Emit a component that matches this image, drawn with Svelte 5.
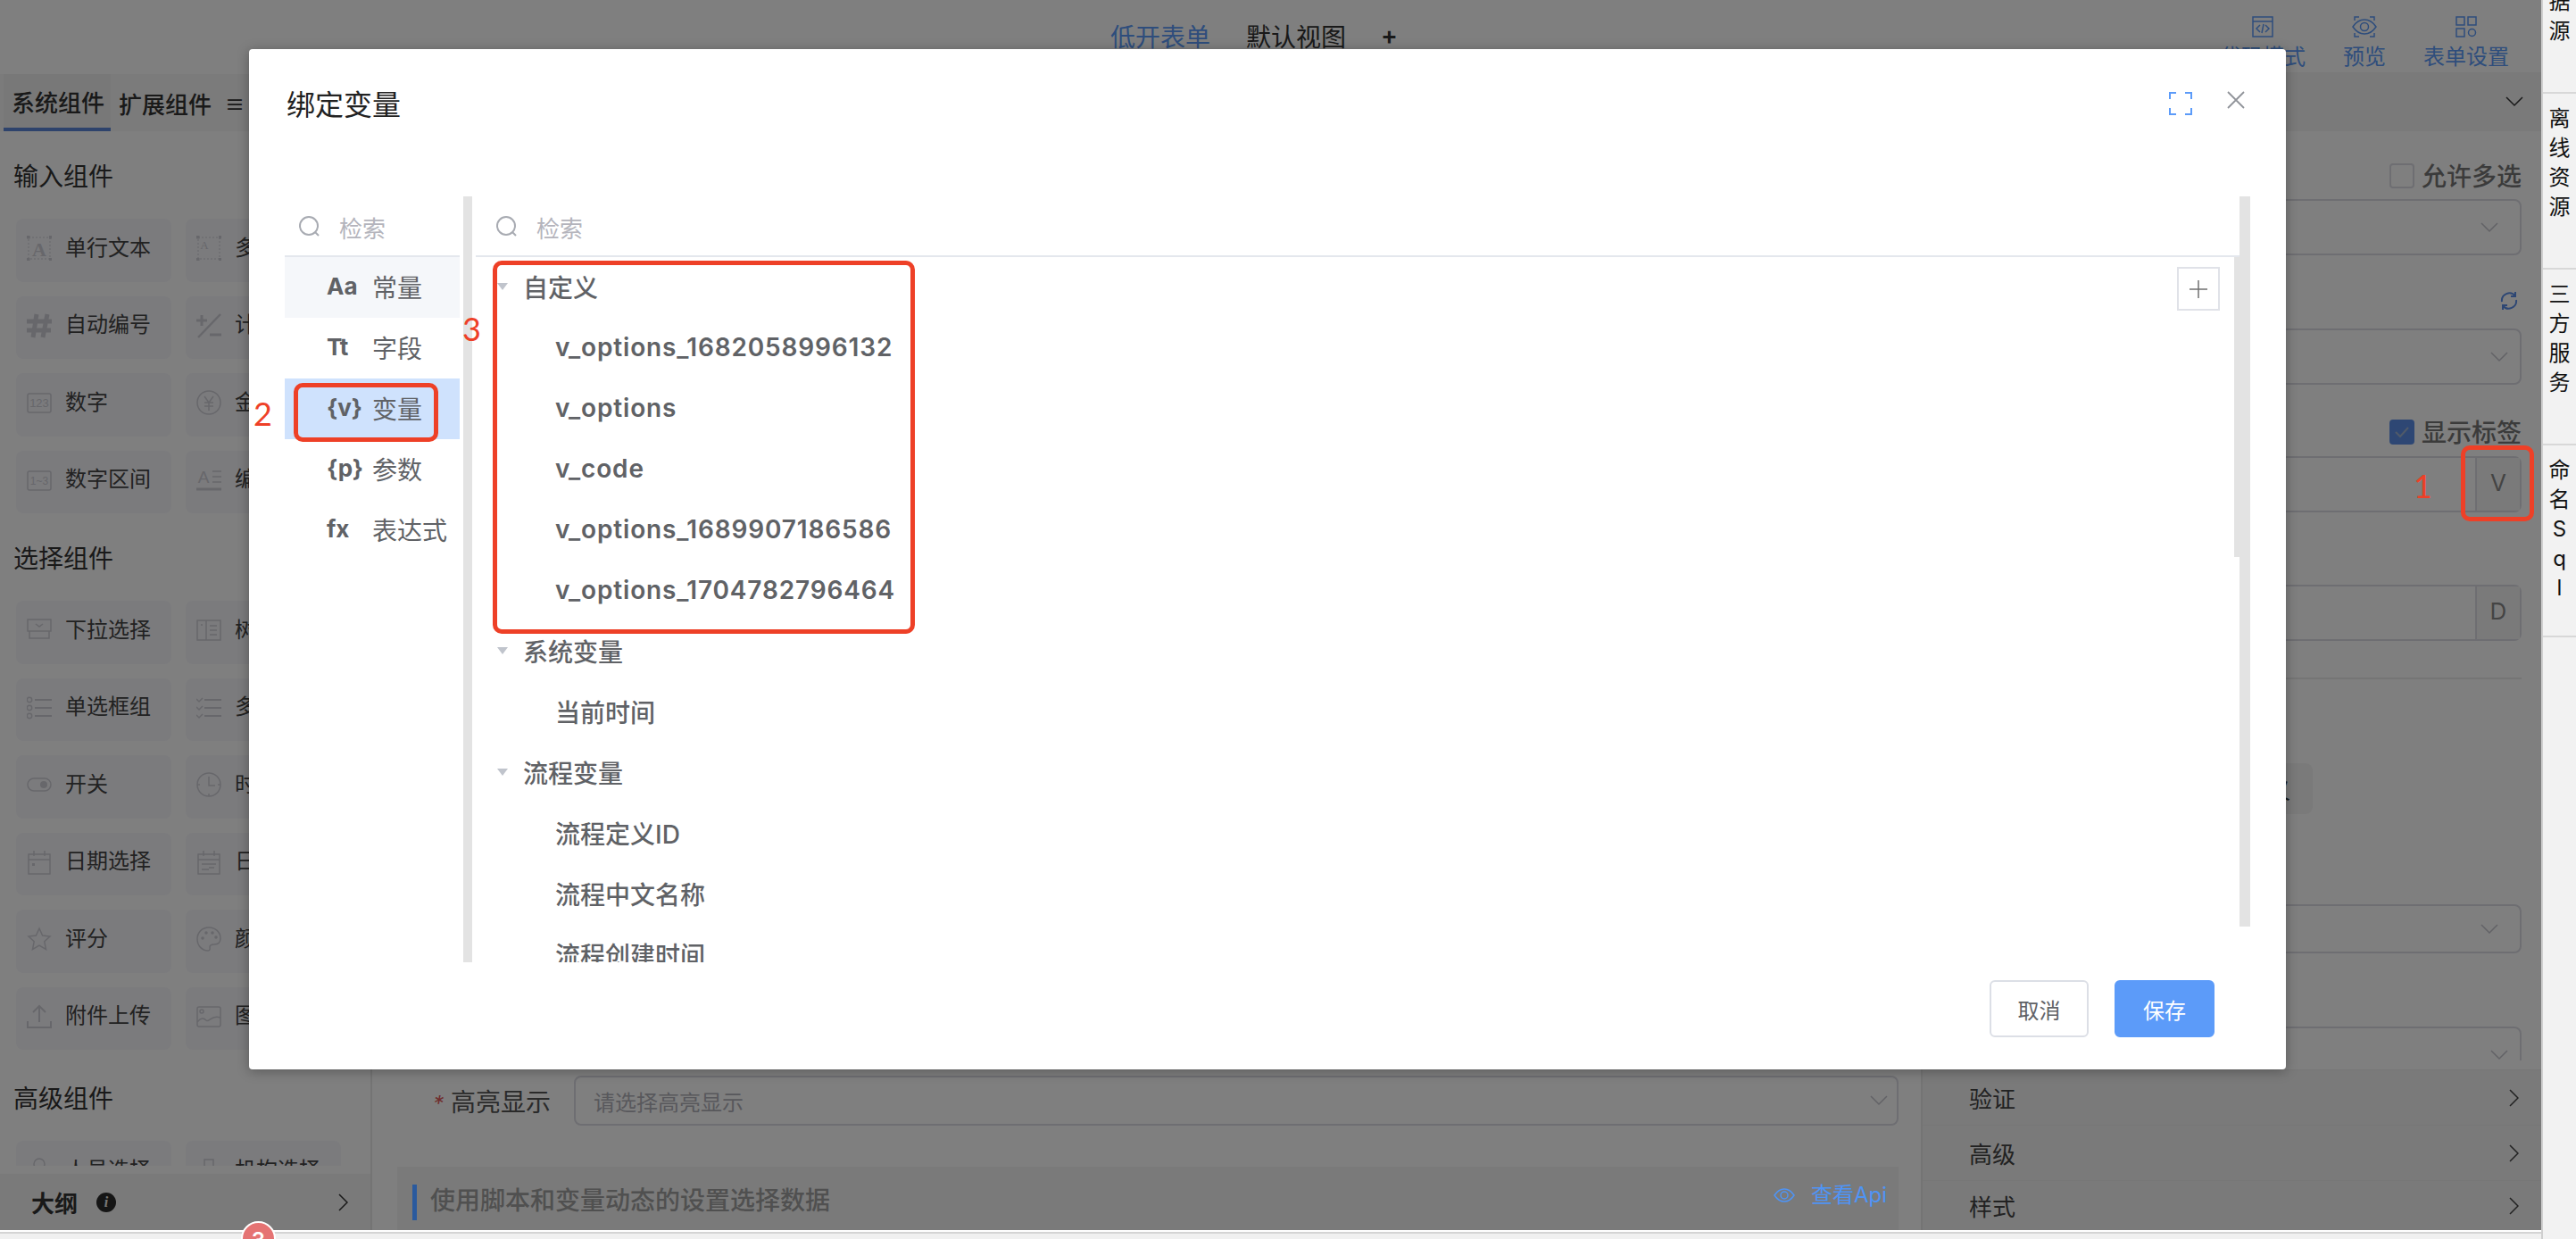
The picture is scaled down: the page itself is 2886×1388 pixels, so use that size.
<script>
  const icons = {
    textA: '<g stroke-dasharray="2 2" stroke-width="1"><rect x="2" y="2" width="24" height="24"/></g><g fill="currentColor" stroke="none"><rect x="0" y="0" width="3.5" height="3.5"/><rect x="25" y="0" width="3.5" height="3.5"/><rect x="0" y="25" width="3.5" height="3.5"/><rect x="25" y="25" width="3.5" height="3.5"/><text x="14" y="23" font-size="22" font-weight="700" font-family="Liberation Serif" text-anchor="middle">A</text></g>',
    multi: '<g stroke-dasharray="2 2" stroke-width="1"><rect x="2" y="2" width="24" height="24"/></g><g fill="currentColor" stroke="none"><rect x="0" y="0" width="3.5" height="3.5"/><rect x="25" y="0" width="3.5" height="3.5"/><rect x="0" y="25" width="3.5" height="3.5"/><rect x="25" y="25" width="3.5" height="3.5"/><text x="9" y="15" font-size="13" font-family="Liberation Serif" text-anchor="middle">A</text></g>',
    hash: '<path stroke-width="5" d="M11 1 7 27M23 1 18 27M0 9h28M0 19h27"/>',
    calc: '<path stroke-width="2.5" d="M27 1 2 27"/><path stroke-width="3" d="M0 8h12M6 2v12M15 24h13"/>',
    n123: '<rect x="1" y="4" width="26" height="21" rx="2"/><text x="14" y="19" font-size="13" fill="currentColor" stroke="none" font-family="Liberation Sans" text-anchor="middle">123</text>',
    yen: '<circle cx="14" cy="14" r="13"/><path d="m9 7 5 7 5-7M9 14h10M9 18h10M14 14v9"/>',
    range: '<rect x="1" y="4" width="26" height="21" rx="2"/><text x="14" y="19" font-size="12" fill="currentColor" stroke="none" font-family="Liberation Sans" text-anchor="middle">1~3</text>',
    editor: '<text x="8" y="17" font-size="19" fill="currentColor" stroke="none" font-family="Liberation Sans" text-anchor="middle">A</text><path d="M18 4h10M18 10h10M18 16h10"/><path stroke-width="3" d="M0 24h28"/>',
    dropdown: '<path d="M1 2h26v13H1zM10 7l4 3 4-3M3 15v8h22v-8"/>',
    tree: '<path d="M1 3h26v22H1zM11 3v22M15 9h8M15 14h8M15 19h8M5 8h2"/>',
    radio: '<circle cx="3" cy="5" r="2.7"/><circle cx="3" cy="14" r="2.7"/><circle cx="3" cy="23" r="2.7"/><path stroke-width="2" d="M9 5h19M9 14h19M9 23h19"/>',
    check: '<path d="m0 4 3 3 4-4M0 13l3 3 4-4M0 22l3 3 4-4"/><path stroke-width="2" d="M9 5h19M9 14h19M9 23h19"/>',
    toggle: '<rect x="1" y="7" width="26" height="14" rx="7"/><circle cx="19" cy="14" r="4" fill="currentColor" stroke="none"/>',
    clock: '<circle cx="14" cy="14" r="13"/><path d="M14 5v10h7M1 14h3M24 14h3M14 24v3"/>',
    date: '<path d="M2 5h24v22H2zM2 11h24M8 1v6M20 1v6"/><rect x="6" y="15" width="3" height="3" fill="currentColor" stroke="none"/>',
    daterange: '<path d="M2 5h24v22H2zM2 11h24M8 1v6M20 1v6M6 16h16M6 22h8M14 20h6"/>',
    star: '<path d="m14 2 3.6 8 8.4 1-6.200 5.800 1.700 8.700L14 21l-7.500 4.500 1.700-8.700L2 11l8.400-1z"/>',
    palette: '<path d="M14 1C6 1 1 7 1 14s5 13 12 13c3 0 2-3 2-4 0-3 3-3 5-3 4 0 7-2 7-7C27 6 21 1 14 1z"/><g fill="currentColor" stroke="none"><circle cx="7" cy="13" r="1.800"/><circle cx="11" cy="7" r="1.800"/><circle cx="18" cy="7" r="1.800"/><circle cx="22" cy="12" r="1.800"/></g>',
    upload: '<path stroke-width="2" d="M14 3v17M7 9l7-7 7 7M1 19v7h26v-7"/>',
    image: '<rect x="1" y="3" width="26" height="22" rx="2"/><circle cx="6" cy="8" r="2"/><path d="M1 20c4-5 7-5 10-2s6-7 16-3"/>',
    person: '<circle cx="14" cy="7" r="6"/><path d="M3 26c1-8 5-10 11-10s10 2 11 10"/>',
    org: '<path d="M9 2h10v9H9zM14 11v5M1 17h26M4 17v6M24 17v6"/>'
  };

  const groups = [
    { title: '输入组件', items: [
      ['单行文本', 'textA'], ['多行文本', 'multi'], ['自动编号', 'hash'], ['计算公式', 'calc'],
      ['数字', 'n123'], ['金额', 'yen'], ['数字区间', 'range'], ['编辑器', 'editor']
    ] },
    { title: '选择组件', items: [
      ['下拉选择', 'dropdown'], ['树形选择', 'tree'], ['单选框组', 'radio'], ['多选框组', 'check'],
      ['开关', 'toggle'], ['时间选择', 'clock'], ['日期选择', 'date'], ['日期区间', 'daterange'],
      ['评分', 'star'], ['颜色选择', 'palette'], ['附件上传', 'upload'], ['图片上传', 'image']
    ] },
    { title: '高级组件', items: [['人员选择', 'person'], ['机构选择', 'org']] }
  ];

  const kinds = [
    { code: 'Aa', label: '常量', cls: 'hover' },
    { code: 'Tt', label: '字段', cls: '' },
    { code: '{v}', label: '变量', cls: 'active' },
    { code: '{p}', label: '参数', cls: '' },
    { code: 'fx', label: '表达式', cls: '' }
  ];

  const tree = [
    { label: '自定义', children: ['v_options_1682058996132', 'v_options', 'v_code', 'v_options_1689907186586', 'v_options_1704782796464'] },
    { label: '系统变量', children: ['当前时间'] },
    { label: '流程变量', children: ['流程定义ID', '流程中文名称', '流程创建时间'] }
  ];

  const tabs = [
    { text: '数据源', cls: 'first' },
    { text: '离线资源', cls: '' },
    { text: '三方服务', cls: '' },
    { text: '命名Sql', cls: 'last' }
  ];
</script>

{#snippet chevron(cls)}
  <svg class={cls} width="20" height="12" viewBox="0 0 20 12" fill="none" stroke="currentColor" stroke-width="1.500"><path d="m1 1 9 9 9-9" /></svg>
{/snippet}

{#snippet arrow()}
  <svg width="11" height="20" viewBox="0 0 11 20" fill="none" stroke="currentColor" stroke-width="1.500"><path d="m1 1 9 9-9 9" /></svg>
{/snippet}

{#snippet search()}
  <svg class="search-icon" width="26" height="26" viewBox="0 0 26 26" fill="none" stroke="#a8abb2" stroke-width="2"><circle cx="12" cy="12" r="10" /><path d="m19 19 4 4" /></svg>
{/snippet}

<div class="page">
  <div class="main">
    <header class="topbar">
      <div class="view-tabs">
        <span class="blue">低开表单</span>
        <span>默认视图</span>
        <span class="plus">+</span>
      </div>
      <div class="top-actions">
        <div class="action">
          <svg width="24" height="24" viewBox="0 0 24 24" fill="none" stroke="currentColor" stroke-width="1.500"><path d="M1 1h22v22H1zM1 6h22M9 10l-4 4 4 4M15 10l4 4-4 4M13 9l-2 10" /></svg>
          <span>代码模式</span>
        </div>
        <div class="action">
          <svg width="28" height="24" viewBox="0 0 28 24" fill="none" stroke="currentColor" stroke-width="1.500"><path d="M1 12c4-6 8-8 13-8s9 2 13 8c-4 6-8 8-13 8S5 18 1 12z" /><circle cx="14" cy="12" r="4.500" /><path d="M3 5V1h5M25 5V1h-5M3 19v4h5M25 19v4h-5" /></svg>
          <span>预览</span>
        </div>
        <div class="action">
          <svg width="24" height="24" viewBox="0 0 24 24" fill="none" stroke="currentColor" stroke-width="1.500"><path d="M1 1h9v9H1zM14 1h9v9h-9zM1 14h9v9H1z" /><circle cx="18.500" cy="18.500" r="4" /></svg>
          <span>表单设置</span>
        </div>
      </div>
    </header>

    <div class="content">
      <aside class="left">
        <div class="left-tabs">
          <span class="left-tab on">系统组件</span>
          <span class="left-tab">扩展组件</span>
          <span class="left-menu">≡</span>
        </div>
        <div class="left-scroll">
          {#each groups as group}
            <section class="group">
              <h3>{group.title}</h3>
              <div class="cards">
                {#each group.items as item}
                  <div class="card">
                    <svg width="28" height="28" viewBox="0 0 28 28" fill="none" stroke="currentColor" stroke-width="1.500">{@html icons[item[1]]}</svg>
                    <span>{item[0]}</span>
                  </div>
                {/each}
              </div>
            </section>
          {/each}
        </div>
        <div class="outline">
          <span class="outline-title">大纲</span>
          <span class="info">i</span>
          <span class="outline-arrow">{@render arrow()}</span>
        </div>
      </aside>

      <section class="center">
        <div class="field">
          <label><em>*</em>高亮显示</label>
          <div class="select">
            <span class="placeholder">请选择高亮显示</span>
            {@render chevron('chev')}
          </div>
        </div>
        <div class="script-head">
          <span class="script-title">使用脚本和变量动态的设置选择数据</span>
        </div>
      </section>

      <aside class="right">
        <div class="right-bar">{@render chevron('dark')}</div>
        <div class="right-body">
          <div class="opt" style:margin-top="36px"><i class="box"></i><span>允许多选</span></div>
          <div class="select" style:margin-top="12px">{@render chevron('chev')}</div>
          <div class="refresh">
            <svg width="22" height="22" viewBox="0 0 22 22" fill="none" stroke="currentColor" stroke-width="2"><path d="M3 12A8.500 8.500 0 0 1 18 5.500M19 10a8.500 8.500 0 0 1-15 6.500M18 1v5h-5M4 21v-5h5" /></svg>
          </div>
          <div class="select shift" style:margin-top="18px">{@render chevron('chev')}</div>
          <div class="opt" style:margin-top="39px">
            <i class="box checked">
              <svg width="18" height="14" viewBox="0 0 18 14" fill="none" stroke="#a0b4d2" stroke-width="2"><path d="m2 7 5 5 9-10" /></svg>
            </i><span>显示标签</span>
          </div>
          <div class="select addon" style:margin-top="13px"><b>V</b></div>
          <div class="select addon" style:margin-top="81px"><b>D</b></div>
          <hr />
          <div class="chip"><span>自定义</span></div>
          <div class="select low" style:margin-top="101px">{@render chevron('chev')}</div>
          <div class="select shift" style:margin-top="82px">{@render chevron('chev')}</div>
        </div>
        {#each ['验证', '高级', '样式'] as name}
          <div class="fold">
            <span>{name}</span>
            {@render arrow()}
          </div>
        {/each}
      </aside>
    </div>

    <div class="mask"></div>
    <span class="api">
      <svg width="24" height="16" viewBox="0 0 24 16" fill="none" stroke="currentColor" stroke-width="1.500"><path d="M1 8c3-4.500 6.500-7 11-7s8 2.500 11 7c-3 4.500-6.500 7-11 7S4 12.500 1 8z" /><circle cx="12" cy="8" r="4" /></svg>
      查看Api
    </span>
    <i class="script-mark"></i>
  </div>

  <nav class="side">
    {#each tabs as tab}
      <div class="side-tab {tab.cls}">
        {#each tab.text as ch}
          <div>{ch}</div>
        {/each}
      </div>
    {/each}
  </nav>

  <div class="status"></div>
  <span class="badge">3</span>

  <div class="modal">
    <div class="modal-head">
      <h2>绑定变量</h2>
      <svg class="expand" width="26" height="26" viewBox="0 0 26 26" fill="none" stroke="#5c9bf9" stroke-width="2"><path d="M1 8V1h7M18 1h7v7M25 18v7h-7M8 25H1v-7" /></svg>
      <svg class="close" width="20" height="20" viewBox="0 0 20 20" fill="none" stroke="#909399" stroke-width="1.800"><path d="m1 1 18 18M19 1 1 19" /></svg>
    </div>
    <div class="modal-body">
      <div class="kinds">
        <div class="search">{@render search()}<span>检索</span></div>
        {#each kinds as kind}
          <div class="kind {kind.cls}"><b>{kind.code}</b><span>{kind.label}</span></div>
        {/each}
      </div>
      <div class="rail"></div>
      <div class="tree-pane">
        <div class="search">{@render search()}<span>检索</span></div>
        <div class="tree">
          <button class="add" aria-label="新增">
            <svg width="20" height="20" viewBox="0 0 20 20" stroke="#707070" stroke-width="1.500"><path d="M10 0v20M0 10h20" /></svg>
          </button>
          <i class="thumb"></i>
          {#each tree as node}
            <div class="row parent"><i class="caret"></i>{node.label}</div>
            {#each node.children as child}
              <div class="row child" class:latin={child.startsWith('v_')}>{child}</div>
            {/each}
          {/each}
        </div>
      </div>
      <div class="rail tall"></div>
    </div>
    <div class="modal-foot">
      <button class="btn">取消</button>
      <button class="btn primary">保存</button>
    </div>
  </div>

  <i class="mark m1"></i>
  <i class="mark m2"></i>
  <i class="mark m3"></i>
  <span class="num n1">1</span>
  <span class="num n2">2</span>
  <span class="num n3">3</span>
</div>

<style>
  :global(body) {
    margin: 0;
    background: #fff;
  }

  .page {
    position: relative;
    display: grid;
    grid-template-columns: 2847px 39px;
    grid-template-rows: 1378px 10px;
    width: 2886px;
    height: 1388px;
    overflow: hidden;
    font-family: Inter, "Noto Sans CJK SC", sans-serif;
    color: #444;
  }

  .main {
    position: relative;
    display: flex;
    flex-direction: column;
    min-width: 0;
    background: #fff;
    overflow: hidden;
  }

  .mask {
    position: absolute;
    inset: 0;
    background: rgba(0, 0, 0, 0.5);
  }

  .topbar {
    position: relative;
    flex: 0 0 78px;
    display: flex;
    justify-content: space-between;
    padding: 0 27px 0 1244px;
  }

  .view-tabs {
    display: flex;
    align-items: center;
    gap: 40px;
    height: 80px;
    font-size: 28px;
    color: #333;
  }

  .blue {
    color: #5c9bf9;
  }

  .plus {
    margin-left: -1px;
    font-weight: 600;
  }

  .top-actions {
    display: flex;
  }

  .action {
    display: flex;
    flex-direction: column;
    align-items: center;
    gap: 5px;
    width: 114px;
    padding-top: 18px;
    font-size: 24px;
    line-height: 34px;
    color: #5c9bf9;
    white-space: nowrap;
  }

  .content {
    flex: 1;
    display: flex;
    min-height: 0;
  }

  /* left component palette */
  .left {
    flex: 0 0 415px;
    display: flex;
    flex-direction: column;
    min-height: 0;
    padding-top: 2px;
    box-sizing: border-box;
  }

  .left-tabs {
    flex: 0 0 64px;
    display: flex;
    align-items: stretch;
    gap: 4px;
    padding-left: 4px;
    background: #f6f6f6;
    font-size: 26px;
    font-weight: 500;
    color: #333;
    box-sizing: border-box;
  }

  .left-tab {
    display: flex;
    align-items: center;
    height: 64px;
    padding: 0 5px;
    white-space: nowrap;
    box-sizing: border-box;
  }

  .left-tab.on {
    width: 120px;
    padding: 0 0 0 9px;
    background: #f0f0f0;
    border-bottom: 4px solid #5c86d8;
  }

  .left-menu {
    align-self: center;
    margin-left: 6px;
    font-size: 22px;
  }

  .left-scroll {
    flex: 1;
    min-height: 0;
    margin-bottom: 9px;
    padding-top: 33px;
    overflow: hidden;
  }

  .group {
    padding-left: 15px;
    margin-bottom: 33px;
  }

  .group:last-child {
    margin-top: 37px;
  }

  h3 {
    height: 40px;
    margin: 0 0 25px;
    font-size: 28px;
    line-height: 36px;
    font-weight: 400;
    color: #333;
  }

  .cards {
    display: grid;
    grid-template-columns: 174px 174px;
    gap: 16px;
    margin-left: 3px;
  }

  .card {
    display: flex;
    align-items: center;
    gap: 15px;
    height: 70.5px;
    padding: 0 0 0 12px;
    background: #f6f6fb;
    border-radius: 8px;
    font-size: 24px;
    color: #444;
    box-sizing: border-box;
  }

  .card span {
    margin-bottom: 10px;
  }

  .card svg {
    flex: none;
    margin-bottom: 4px;
    color: #cfcfd6;
  }

  .outline {
    flex: 0 0 63px;
    display: flex;
    align-items: center;
    padding: 0 25px 0 35px;
    background: #f5f5f5;
    font-size: 26px;
    font-weight: 600;
    color: #333;
  }

  .outline-title {
    width: 73px;
  }

  .info {
    width: 22px;
    height: 22px;
    border-radius: 50%;
    background: #2b2b2b;
    color: #eee;
    font: italic 700 16px/22px "Liberation Serif", serif;
    text-align: center;
  }

  .outline-arrow {
    margin-left: auto;
    line-height: 0;
  }

  /* center form */
  .center {
    flex: 1;
    min-width: 0;
    display: flex;
    flex-direction: column;
    justify-content: flex-end;
    padding: 0 25px 0 28px;
    background: #fff;
    border-left: 2px solid #e8e8e8;
    border-right: 2px solid #e8e8e8;
    box-sizing: border-box;
  }

  .field {
    display: flex;
    align-items: center;
    gap: 26px;
    margin-bottom: 46px;
  }

  label {
    width: 172px;
    text-align: right;
    font-size: 28px;
    color: #555;
  }

  label em {
    margin-right: 8px;
    color: #e05a5a;
    font-size: 24px;
  }

  .placeholder {
    font-size: 24px;
    color: #b0b0b8;
  }

  .select {
    position: relative;
    display: flex;
    align-items: center;
    flex: 1;
    min-height: 56px;
    padding: 0 10px 0 20px;
    border: 2px solid #dcdce4;
    border-radius: 8px;
    box-sizing: border-box;
  }

  .right-body .select {
    flex: 0 0 63px;
    min-height: 63px;
    padding: 0 24px;
  }

  .right-body .select.low {
    flex-basis: 55px;
    min-height: 55px;
  }

  .chev {
    margin-left: auto;
    color: #c4c4cc;
  }

  .shift .chev {
    margin-right: -11px;
  }

  .dark {
    color: #333;
  }

  .script-head {
    flex: 0 0 71px;
    display: flex;
    align-items: center;
    padding-left: 37px;
    background: #f5f5f5;
    box-sizing: border-box;
  }

  .script-title {
    font-size: 28px;
    font-weight: 500;
    color: #a0a0a0;
  }

  .script-mark {
    position: absolute;
    left: 462px;
    top: 1327px;
    width: 5px;
    height: 40px;
    background: #2a5a9e;
  }

  .api {
    position: absolute;
    left: 1987px;
    top: 1324px;
    display: flex;
    align-items: center;
    gap: 18px;
    font-size: 24px;
    line-height: 30px;
    color: #4f94f5;
  }

  /* right properties */
  .right {
    flex: 0 0 693px;
    display: flex;
    flex-direction: column;
    min-height: 0;
  }

  .right-bar {
    flex: 0 0 66px;
    display: flex;
    align-items: center;
    justify-content: flex-end;
    padding-right: 20px;
    background: #f5f5f5;
  }

  .right-body {
    flex: 1;
    min-height: 0;
    display: flex;
    flex-direction: column;
    margin-bottom: 10px;
    padding: 0 22px;
    overflow: hidden;
  }

  .opt {
    flex: none;
    display: flex;
    align-items: center;
    justify-content: flex-end;
    gap: 8px;
    height: 28px;
    font-size: 28px;
    font-weight: 500;
    color: #777;
  }

  .opt span {
    margin-bottom: 3px;
  }

  .box {
    display: flex;
    align-items: center;
    justify-content: center;
    width: 28px;
    height: 28px;
    border: 2px solid #dcdce4;
    border-radius: 4px;
    box-sizing: border-box;
  }

  .box.checked {
    background: #5c8fe8;
    border-color: #5c8fe8;
  }

  .refresh {
    flex: none;
    display: flex;
    justify-content: flex-end;
    height: 24px;
    margin-top: 40px;
    padding-right: 3px;
    color: #5c8fe8;
  }

  .select.addon {
    justify-content: flex-end;
    padding: 0;
  }

  .select.addon b {
    display: flex;
    align-items: center;
    justify-content: center;
    width: 50px;
    height: 100%;
    padding-bottom: 4px;
    background: #f5f5f5;
    border-left: 2px solid #dcdce4;
    font-size: 26px;
    font-weight: 400;
    color: #888;
    box-sizing: border-box;
  }

  hr {
    flex: none;
    width: 100%;
    height: 2px;
    margin: 41px 0 0;
    border: 0;
    background: #eaeaea;
  }

  .chip {
    flex: 0 0 57px;
    display: flex;
    align-items: center;
    justify-content: flex-end;
    width: 415px;
    margin-top: 94px;
    padding-right: 25px;
    background: #f5f5f5;
    border-radius: 8px;
    font-size: 26px;
    color: #333;
    box-sizing: border-box;
  }

  .fold {
    flex: 0 0 62px;
    display: flex;
    align-items: center;
    justify-content: space-between;
    padding: 0 25px 0 52px;
    background: #f5f5f5;
    border-top: 1px solid #eee;
    font-size: 26px;
    color: #444;
    box-sizing: border-box;
  }

  .fold:last-child {
    flex-basis: 56px;
  }

  /* vertical tabs */
  .side {
    grid-row: 1 / 3;
    grid-column: 2;
    position: relative;
    background: #f2f2f2;
    border-left: 2px solid #cfcfcf;
  }

  .side-tab {
    padding: 11px 0 52px;
    border-bottom: 2px solid #d8d8d8;
    font-size: 24px;
    line-height: 33px;
    color: #111;
    text-align: center;
  }

  .side-tab.first {
    margin-top: -59px;
  }

  .side-tab.last {
    padding-bottom: 37px;
  }

  .status {
    background: #f0f0f0;
    border-top: 2px solid #fff;
    box-shadow: inset 0 2px 0 #d4d4d4;
  }

  .badge {
    position: absolute;
    left: 270px;
    top: 1368px;
    width: 39px;
    height: 39px;
    border: 2px solid #fff;
    border-radius: 50%;
    background: #e57373;
    color: #fff;
    font-size: 24px;
    font-weight: 600;
    line-height: 39px;
    text-align: center;
    box-sizing: border-box;
  }

  /* dialog */
  .modal {
    position: absolute;
    left: 279px;
    top: 55px;
    display: flex;
    flex-direction: column;
    width: 2282px;
    height: 1143px;
    background: #fff;
    border-radius: 4px;
    box-shadow: 0 2px 14px rgba(0, 0, 0, 0.3);
  }

  .modal-head {
    flex: 0 0 165px;
    display: flex;
    align-items: flex-start;
    padding: 46px 46px 0 42px;
    box-sizing: border-box;
  }

  h2 {
    flex: 1;
    margin: 0;
    font-size: 32px;
    line-height: 34px;
    font-weight: 400;
    color: #222;
  }

  .expand {
    margin: 2px 39px 0 0;
  }

  .close {
    margin-top: 1px;
  }

  .modal-body {
    flex: 0 0 858px;
    display: flex;
    min-height: 0;
    padding-left: 40px;
  }

  .kinds {
    flex: 0 0 196px;
  }

  .search {
    display: flex;
    align-items: center;
    height: 68px;
    padding: 2px 0 0 15px;
    border-bottom: 2px solid #e4e7ed;
    font-size: 26px;
    color: #b4b4bc;
    box-sizing: border-box;
  }

  .search-icon {
    margin-right: 20px;
  }

  .kind {
    display: flex;
    align-items: center;
    height: 68px;
    padding: 0 0 3px 47px;
    font-size: 28px;
    color: #606266;
    box-sizing: border-box;
  }

  .kind b {
    width: 51px;
    font-size: 26px;
    font-weight: 700;
    white-space: nowrap;
  }

  .kind.hover {
    background: #f5f7fa;
  }

  .kind.active {
    background: #cfe2fd;
  }

  .rail {
    flex: none;
    width: 10px;
    margin: 0 4px;
    background: #e3e3e3;
  }

  .rail.tall {
    width: 12px;
    height: 818px;
    margin: 0;
  }

  .tree-pane {
    flex: 0 0 1976px;
    display: flex;
    flex-direction: column;
    min-height: 0;
  }

  .tree-pane .search {
    flex: none;
    padding-left: 22px;
  }

  .tree {
    position: relative;
    flex: 1;
    min-height: 0;
    overflow: hidden;
  }

  .row {
    display: flex;
    align-items: center;
    height: 68px;
    padding-bottom: 3px;
    font-size: 28px;
    color: #606266;
    white-space: nowrap;
    box-sizing: border-box;
  }

  .parent {
    padding-left: 24px;
    font-weight: 500;
    gap: 17px;
  }

  .child {
    padding-left: 89px;
    font-weight: 500;
  }

  .child.latin {
    font-weight: 600;
    letter-spacing: 0.85px;
  }

  .caret {
    width: 0;
    height: 0;
    border-left: 6px solid transparent;
    border-right: 6px solid transparent;
    border-top: 8px solid #c0c4cc;
  }

  .add {
    position: absolute;
    top: 11px;
    right: 22px;
    display: flex;
    align-items: center;
    justify-content: center;
    width: 48px;
    height: 49px;
    padding: 0;
    background: #fff;
    border: 2px solid #e0e2e8;
  }

  .thumb {
    position: absolute;
    top: 0;
    right: 0;
    width: 6px;
    height: 336px;
    background: #e3e3e3;
  }

  .modal-foot {
    flex: 1;
    display: flex;
    justify-content: flex-end;
    align-items: flex-start;
    gap: 29px;
    padding: 20px 80px 0 0;
  }

  .btn {
    width: 111px;
    height: 64px;
    background: #fff;
    border: 2px solid #dcdfe6;
    border-radius: 6px;
    font: inherit;
    font-size: 24px;
    color: #606266;
    box-sizing: border-box;
  }

  .btn.primary {
    width: 112px;
    background: #5c9bf9;
    border-color: #5c9bf9;
    color: #fff;
  }

  /* annotations drawn on the screenshot */
  .mark {
    position: absolute;
    border: 5px solid #ee4027;
    border-radius: 10px;
    box-sizing: border-box;
  }

  .m1 {
    left: 2757px;
    top: 499px;
    width: 82px;
    height: 85px;
  }

  .m2 {
    left: 329px;
    top: 429px;
    width: 162px;
    height: 66px;
  }

  .m3 {
    left: 552px;
    top: 292px;
    width: 473px;
    height: 418px;
  }

  .num {
    position: absolute;
    font-family: Lato, sans-serif;
    font-size: 36px;
    font-weight: 400;
    line-height: 36px;
    color: #ee4027;
  }

  .n1 {
    left: 2704px;
    top: 526px;
  }

  .n2 {
    left: 284px;
    top: 445px;
  }

  .n3 {
    left: 518px;
    top: 350px;
  }
</style>
